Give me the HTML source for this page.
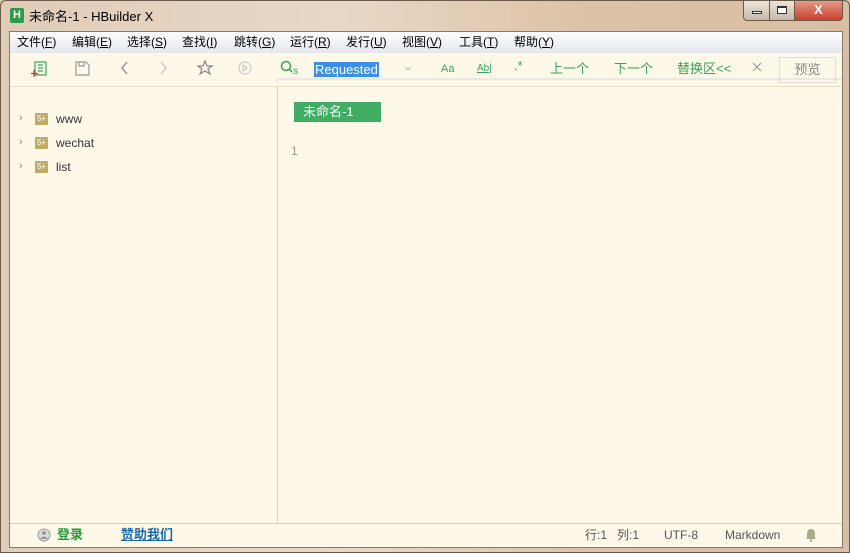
<!DOCTYPE html>
<html><head><meta charset="utf-8"><style>
*{margin:0;padding:0;box-sizing:border-box}
body{width:850px;height:553px;overflow:hidden;font-family:"Liberation Sans","Noto Sans CJK SC",sans-serif;font-size:12px;background:#d9c3ab}
.frame{position:absolute;left:0;top:0;width:850px;height:553px;border:1px solid #6b5a4a;border-radius:6px 6px 0 0;background:linear-gradient(90deg,#e0cdb8,#e8d8c6 40%,#dcc2a6 70%,#d8bfa4)}
.title{position:absolute;left:28px;top:5px;font-size:13px;color:#000}
.hico{position:absolute;left:9px;top:7px;width:14px;height:15px;background:#2d9a4a;border-radius:2px;color:#fff;font-size:11px;font-weight:bold;text-align:center;line-height:15px}
.btns{position:absolute;left:742px;top:0;width:100px;height:20px}
.b{position:absolute;top:0;height:20px;border:1px solid #6b5a4a;border-top:none}
.inner{position:absolute;left:8px;top:30px;width:834px;height:517px;background:#fdf8e7;border:1px solid #8a7a6a}
.menu{position:absolute;left:0;top:0;width:832px;height:21px;background:linear-gradient(#fdfdfd,#e4e8f0);font-size:12px}
.menu span{position:absolute;top:0;line-height:21px;color:#000}
.tool{position:absolute;left:0;top:21px;width:832px;height:34px;background:#fdf8e7;border-bottom:1px solid #e6dfc6}
.tool .t{position:absolute;color:#3aa35a;font-size:13px;top:0;line-height:32px}
.side{position:absolute;left:0;top:55px;width:268px;height:436px;border-right:1px solid #d8d0b5}
.item{position:absolute;left:9px;font-size:12px;color:#333}
.item .ch{position:absolute;left:0;top:-1px;color:#888;font-size:11px}
.item .ic{position:absolute;left:16px;top:0;width:13px;height:12px;background:#bfae6a;color:#fff;font-size:8px;line-height:12px;text-align:center}
.item .n{position:absolute;left:37px;top:-1px}
.status{position:absolute;left:0;top:491px;width:832px;height:24px;border-top:1px solid #d8d0b5;font-size:12px;color:#555}
.status span{position:absolute;top:0;line-height:22px}
</style></head><body>
<div class="frame">
<div class="hico">H</div>
<div class="title">未命名-1 - HBuilder X</div>
<div class="btns">
<div class="b" style="left:0;width:27px;background:linear-gradient(#ece4da,#c9b8a6);border-radius:0 0 0 4px"><div style="position:absolute;left:8px;top:10px;width:10px;height:3px;border:1px solid #333;background:#fff"></div></div>
<div class="b" style="left:26px;width:26px;background:linear-gradient(#ece4da,#c9b8a6)"><div style="position:absolute;left:7px;top:5px;width:10px;height:8px;border:1px solid #333;border-top-width:2px;background:#fff"></div></div>
<div class="b" style="left:51px;width:49px;background:linear-gradient(#e49a88,#c8402a);border-radius:0 0 4px 0;color:#fff;font-weight:bold;text-align:center;font-size:13px;line-height:18px">X</div>
</div>
<div class="inner">
<div class="menu">
<span style="left:7px">文件(<u>F</u>)</span><span style="left:62px">编辑(<u>E</u>)</span><span style="left:117px">选择(<u>S</u>)</span><span style="left:172px">查找(<u>I</u>)</span><span style="left:224px">跳转(<u>G</u>)</span><span style="left:280px">运行(<u>R</u>)</span><span style="left:336px">发行(<u>U</u>)</span><span style="left:392px">视图(<u>V</u>)</span><span style="left:449px">工具(<u>T</u>)</span><span style="left:504px">帮助(<u>Y</u>)</span>
</div>
<div class="tool">
<svg width="832" height="34" style="position:absolute;left:0;top:0" fill="none" stroke-width="1.2">
<g stroke="#3aa35a"><rect x="25" y="9" width="11" height="13"/><path d="M28 12h5M28 15h5M28 18h5"/></g><path d="M24 17v7M21 20.5h7" stroke="#d33"/>
<path d="M66 9h10l3 3v10h-13zM69 9v4h5v-4" stroke="#999"/>
<path d="M117 9l-5 6 5 6" stroke="#999" stroke-width="1.5"/>
<path d="M151 9l5 6-5 6" stroke="#ccc" stroke-width="1.5"/>
<path d="M195 8l2 5h5l-4 3 2 5-5-3-5 3 2-5-4-3h5z" stroke="#888"/>
<circle cx="235" cy="15" r="6" stroke="#ccc"/><path d="M233 12v6l4-3z" stroke="#ccc"/>
<circle cx="276" cy="13" r="4.5" stroke="#3aa35a" stroke-width="1.5"/><path d="M279 16l3 3" stroke="#3aa35a" stroke-width="1.5"/>
<path d="M267 30v-4h757v4" stroke="#ddd"/>
<path d="M395 14l3 3 3-3" stroke="#bbb"/>
<path d="M743 10l8 8M751 10l-8 8" stroke="#999"/>
</svg>
<span style="position:absolute;left:283px;top:13px;color:#3aa35a;font-size:10px">s</span>
<span style="position:absolute;left:304px;top:9px;background:#3b8fe5;color:#fff;font-size:13px;padding:0 1px;line-height:15px">Requested</span>
<span class="t" style="left:431px;font-size:11px">Aa</span>
<span class="t" style="left:467px;font-size:10px;text-decoration:underline">Ab|</span>
<span class="t" style="left:504px;top:-3px">.*</span>
<span class="t" style="left:540px">上一个</span>
<span class="t" style="left:604px">下一个</span>
<span class="t" style="left:667px">替换区&lt;&lt;</span>
<div style="position:absolute;left:769px;top:4px;width:57px;height:26px;border:1px solid #ddd;color:#888;font-size:13px;text-align:center;line-height:24px">预览</div>
</div>
<div class="side">
<div class="item" style="top:26px"><span class="ch">›</span><span class="ic">5+</span><span class="n">www</span></div>
<div class="item" style="top:50px"><span class="ch">›</span><span class="ic">5+</span><span class="n">wechat</span></div>
<div class="item" style="top:74px"><span class="ch">›</span><span class="ic">5+</span><span class="n">list</span></div>
</div>
<div style="position:absolute;left:284px;top:70px;width:87px;height:20px;background:#3fae62;color:#fff;font-size:13px;line-height:20px;padding-left:9px">未命名-1</div>
<div style="position:absolute;left:281px;top:112px;color:#999;font-size:12px">1</div>
<div class="status">
<svg width="14" height="14" style="position:absolute;left:27px;top:4px"><circle cx="7" cy="7" r="6" fill="#ddd" stroke="#999"/><circle cx="7" cy="5" r="2" fill="#999"/><path d="M3 11q4-5 8 0" fill="#999"/></svg>
<span style="left:47px;color:#2a9a3a;font-weight:bold;font-size:13px">登录</span>
<span style="left:111px;color:#1a6aa8;font-weight:bold;text-decoration:underline;font-size:13px">赞助我们</span>
<span style="left:575px">行:1</span><span style="left:607px">列:1</span><span style="left:654px">UTF-8</span><span style="left:715px">Markdown</span>
<svg width="12" height="14" style="position:absolute;left:795px;top:4px"><path d="M6 1q-4 0-4 5v4l-1 1h10l-1-1v-4q0-5-4-5z" fill="#a8ab8a"/><circle cx="6" cy="12.5" r="1.3" fill="#a8ab8a"/></svg>
</div>
</div>
</div>
</body></html>
